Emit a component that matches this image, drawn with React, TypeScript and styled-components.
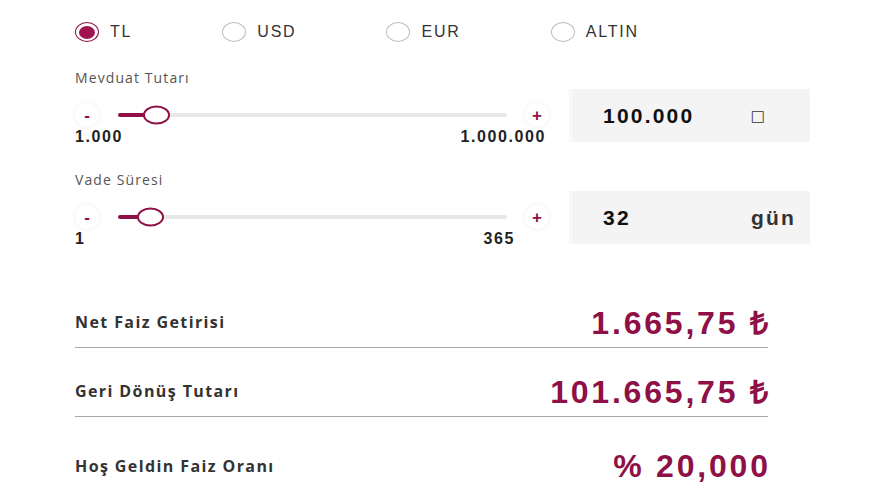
import React from "react";
import styled, { createGlobalStyle } from "styled-components";

const CRIMSON = "#8e1046";

const Global = createGlobalStyle`
  html, body { margin: 0; padding: 0; background: #ffffff; }
  body { font-family: "Liberation Sans", Arial, sans-serif; }
`;

const Page = styled.div`
  width: 880px;
  height: 495px;
  box-sizing: border-box;
  padding: 21px 0 0 75px;
  overflow: hidden;
`;

const RadioRow = styled.div`
  display: flex;
  align-items: center;
  gap: 90px;
  height: 22px;
`;

const RadioItem = styled.label`
  display: flex;
  align-items: center;
  gap: 11px;
  font-family: "Liberation Sans", Arial, sans-serif;
  font-size: 16px;
  letter-spacing: 1.8px;
  color: #333;
`;

const RadioCircle = styled.span<{ $checked?: boolean }>`
  width: 24px;
  height: 20px;
  box-sizing: border-box;
  border-radius: 50%;
  border: 1.5px solid ${(p) => (p.$checked ? CRIMSON : "#bdbdbd")};
  display: flex;
  align-items: center;
  justify-content: center;
  &::after {
    content: "";
    display: ${(p) => (p.$checked ? "block" : "none")};
    width: 16px;
    height: 13px;
    border-radius: 50%;
    background: #a01250;
  }
`;

const Section = styled.div<{ $top: number }>`
  margin-top: ${(p) => p.$top}px;
`;

const FieldLabel = styled.div`
  font-family: "Open Sans", sans-serif;
  font-size: 14px;
  line-height: 18px;
  letter-spacing: 1.1px;
  color: #555;
  height: 18px;
  margin-bottom: 2px;
`;

const SliderRow = styled.div`
  display: grid;
  grid-template-columns: 474px 241px;
  column-gap: 20px;
`;

const SliderArea = styled.div`
  padding-top: 14px;
`;

const TrackLine = styled.div`
  display: flex;
  align-items: center;
  height: 24px;
`;

const StepButton = styled.span`
  width: 24px;
  height: 24px;
  flex: none;
  border-radius: 50%;
  background: #fff;
  box-shadow: 0 0 4px rgba(0, 0, 0, 0.08);
  display: flex;
  align-items: center;
  justify-content: center;
  color: ${CRIMSON};
  font-family: "Liberation Sans", Arial, sans-serif;
  font-weight: bold;
  font-size: 17px;
  line-height: 1;
`;

const Track = styled.div`
  position: relative;
  flex: 1;
  height: 4px;
  margin: 0 18px 0 19px;
  border-radius: 2px;
  background: #e8e8e8;
`;

const Fill = styled.div`
  position: absolute;
  left: 0;
  top: 0;
  height: 4px;
  border-radius: 2px;
  background: ${CRIMSON};
`;

const Thumb = styled.span`
  position: absolute;
  top: 50%;
  width: 27px;
  height: 19px;
  box-sizing: border-box;
  transform: translateY(-50%);
  border-radius: 50%;
  border: 2px solid ${CRIMSON};
  background: #fff;
`;

const RangeLabels = styled.div<{ $rightPad: number }>`
  display: flex;
  justify-content: space-between;
  padding-right: ${(p) => p.$rightPad}px;
  margin-top: 1px;
  font-family: "Liberation Sans", Arial, sans-serif;
  font-weight: bold;
  font-size: 16px;
  line-height: 17px;
  letter-spacing: 1.6px;
  color: #222;
`;

const ValueBox = styled.div`
  height: 53px;
  box-sizing: border-box;
  background: #f4f4f4;
  border-left: 4px solid #f8f8f8;
  display: flex;
  align-items: center;
  justify-content: space-between;
  padding: 0 14px 0 30px;
  font-family: "Liberation Sans", Arial, sans-serif;
  font-weight: bold;
  font-size: 21px;
  letter-spacing: 2.2px;
  color: #111;
`;

const Unit = styled.span<{ $box?: boolean }>`
  color: #333;
  font-family: ${(p) => (p.$box ? '"DejaVu Sans", sans-serif' : '"Liberation Sans", Arial, sans-serif')};
  font-weight: ${(p) => (p.$box ? "normal" : "bold")};
  font-size: ${(p) => (p.$box ? "15px" : "21px")};
  letter-spacing: ${(p) => (p.$box ? "0" : "2.2px")};
  margin-right: ${(p) => (p.$box ? "31px" : "0")};
`;

const Results = styled.div`
  width: 693px;
  margin-top: 49px;
`;

const ResultRow = styled.div<{ $divider?: boolean; $after: number }>`
  display: flex;
  align-items: center;
  justify-content: space-between;
  height: 52px;
  box-sizing: border-box;
  border-bottom: ${(p) => (p.$divider ? "1.5px solid #a8a8a8" : "none")};
  margin-bottom: ${(p) => p.$after}px;
`;

const ResultLabel = styled.span`
  font-family: "Open Sans", sans-serif;
  font-weight: bold;
  font-size: 16px;
  letter-spacing: 1.4px;
  color: #333;
`;

const ResultValue = styled.span`
  font-family: "Liberation Sans", Arial, sans-serif;
  font-weight: bold;
  font-size: 32px;
  letter-spacing: 2.8px;
  margin-right: -2.8px;
  color: ${CRIMSON};
`;

const currencies = ["TL", "USD", "EUR", "ALTIN"];

function Slider({
  min,
  max,
  thumbLeft,
  value,
  unit,
  boxUnit,
  rightPad,
}: {
  min: string;
  max: string;
  thumbLeft: number;
  value: string;
  unit: string;
  boxUnit?: boolean;
  rightPad: number;
}) {
  return (
    <SliderRow>
      <SliderArea>
        <TrackLine>
          <StepButton>-</StepButton>
          <Track>
            <Fill style={{ width: thumbLeft + 2 }} />
            <Thumb style={{ left: thumbLeft }} />
          </Track>
          <StepButton>+</StepButton>
        </TrackLine>
        <RangeLabels $rightPad={rightPad}>
          <span>{min}</span>
          <span>{max}</span>
        </RangeLabels>
      </SliderArea>
      <ValueBox>
        <span>{value}</span>
        <Unit $box={boxUnit}>{unit}</Unit>
      </ValueBox>
    </SliderRow>
  );
}

const results = [
  { label: "Net Faiz Getirisi", value: "1.665,75 ₺", divider: true, after: 17 },
  { label: "Geri Dönüş Tutarı", value: "101.665,75 ₺", divider: true, after: 23 },
  { label: "Hoş Geldin Faiz Oranı", value: "% 20,000", divider: false, after: 0 },
];

export default function App() {
  return (
    <>
      <Global />
      <Page>
        <RadioRow>
          {currencies.map((c, i) => (
            <RadioItem key={c}>
              <RadioCircle $checked={i === 0} />
              {c}
            </RadioItem>
          ))}
        </RadioRow>
        <Section $top={26}>
          <FieldLabel>Mevduat Tutarı</FieldLabel>
          <Slider
            min="1.000"
            max="1.000.000"
            thumbLeft={25}
            value="100.000"
            unit="□"
            boxUnit
            rightPad={3}
          />
        </Section>
        <Section $top={26}>
          <FieldLabel>Vade Süresi</FieldLabel>
          <Slider
            min="1"
            max="365"
            thumbLeft={19}
            value="32"
            unit="gün"
            rightPad={34}
          />
        </Section>
        <Results>
          {results.map((r) => (
            <ResultRow key={r.label} $divider={r.divider} $after={r.after}>
              <ResultLabel>{r.label}</ResultLabel>
              <ResultValue>{r.value}</ResultValue>
            </ResultRow>
          ))}
        </Results>
      </Page>
    </>
  );
}
